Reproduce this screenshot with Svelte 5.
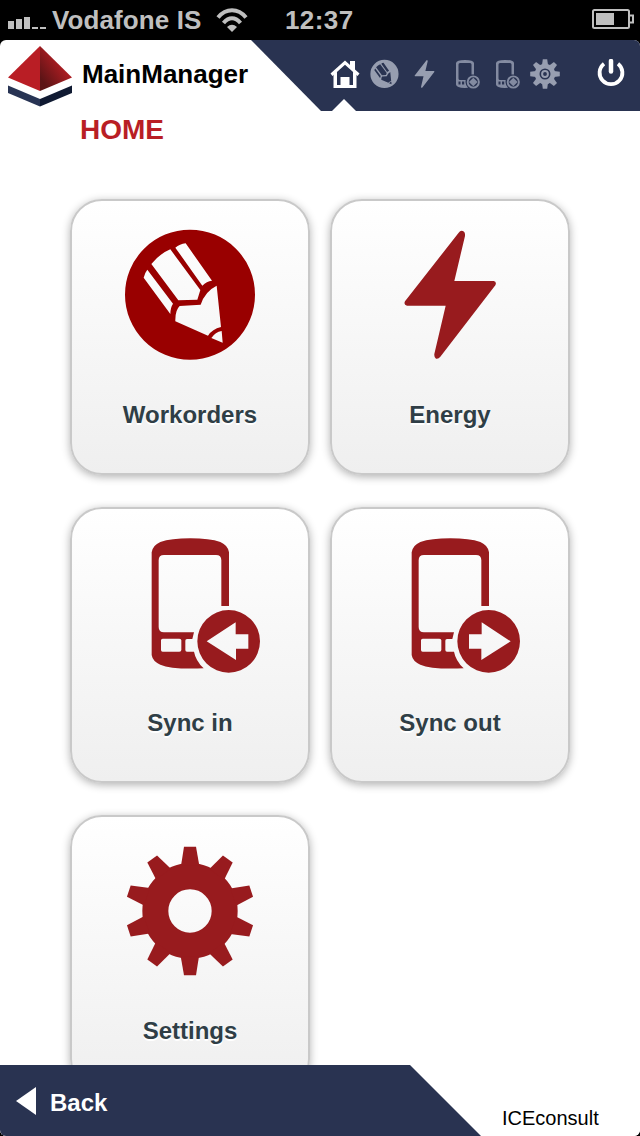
<script lang="ts">
	type Tile = { id: string; label: string }

	const tiles: Tile[] = [
		{ id: 'workorders', label: 'Workorders' },
		{ id: 'energy', label: 'Energy' },
		{ id: 'in', label: 'Sync in' },
		{ id: 'out', label: 'Sync out' },
		{ id: 'settings', label: 'Settings' },
	]

	let current = $state('home')

	// ten teeth for the large gear, eight for the small one
	const bigTeeth = Array.from({ length: 10 }, (_, i) => i * 36)
	const smallTeeth = Array.from({ length: 8 }, (_, i) => i * 45)
</script>

{#snippet shape(id: string)}
	{#if id === 'workorders'}
		<path
			fill-rule="evenodd"
			d="M240 44a195 195 0 1 0 0 390a195 195 0 1 0 0-390ZM196 98Q209 87 227 85L306 197Q290 199 277 212ZM124 147Q149 116 181 103L271 225L262 254L205 256ZM112 164L189 266Q181 278 181 297L101 188Q104 174 112 164ZM196 319Q195 286 209 273L272 269Q285 229 320 212L333 336Q307 342 294 362ZM304 369Q316 351 335 348L338 383Z"
		/>
	{:else if id === 'energy'}
		<path
			d="M266 53Q271 46 278 48Q286 50 285 63L253 198H371Q381 200 376 211L211 425Q205 433 198 431Q192 428 193 417L227 272H111Q100 269 105 259Z"
		/>
	{:else if id === 'in' || id === 'out'}
		<path
			fill-rule="evenodd"
			d="M125 88Q128 67 151 57Q183 46 241 46Q299 46 331 57Q354 67 357 88V249H334V112Q334 96 318 96H162Q146 96 146 112V312Q146 328 162 328H252L247 348H231Q226 348 226 353V381Q226 386 231 386H252Q257 413 281 436Q185 440 151 425Q128 415 125 396ZM158 347Q153 347 153 352V381Q153 386 158 386H208Q214 386 214 381V352Q214 347 208 347Z"
		/>
		<path
			fill-rule="evenodd"
			d={id === 'in'
				? 'M356 261a94 94 0 1 0 0 188a94 94 0 1 0 0-188ZM290 355L377 298V334H415V377H378V411Z'
				: 'M356 261a94 94 0 1 0 0 188a94 94 0 1 0 0-188ZM422 355L335 298V334H297V377H334V411Z'}
		/>
	{:else if id === 'settings'}
		<circle cx="240" cy="240" r="104" fill="none" stroke="currentColor" stroke-width="78" />
		{#each bigTeeth as angle}
			<path d="M213 104L222 47H258L268 104Z" transform="rotate({angle} 240 240)" />
		{/each}
	{/if}
{/snippet}

<div class="screen">
	<div class="status">
		<svg class="signal" viewBox="0 0 38 12" width="38" height="12">
			<path d="M0 4h6v8H0zM8 2h6v10H8zM16 0h6v12h-6zM24 10h6v2h-6zM32 10h6v2h-6z" />
		</svg>
		<span class="carrier">Vodafone IS</span>
		<svg class="wifi" viewBox="0 0 32 24" width="32" height="24">
			<g fill="none" stroke="currentColor" stroke-width="4">
				<path d="M2 9.500Q8 2.300 16 2.300T30 9.500" />
				<path d="M7.500 15Q11.500 10.300 16 10.300T24.500 15" />
			</g>
			<path d="M11 19Q16 14.500 21 19L16 24Z" />
		</svg>
		<span class="clock">12:37</span>
		<svg class="battery" viewBox="0 0 42 20" width="42" height="20">
			<rect x="1" y="1" width="36" height="18" rx="1.500" fill="none" stroke="currentColor" stroke-width="2" />
			<path d="M4 4h18v12H4z" />
			<path d="M37 6.500h4v7h-4" fill="none" stroke="currentColor" stroke-width="2" />
		</svg>
	</div>

	<div class="page">
		<header>
			<div class="brand">
				<svg viewBox="0 0 64 61" width="64" height="61">
					<defs>
						<linearGradient id="side" x1="0.8" y1="0.1" x2="0.1" y2="0.8">
							<stop offset="0.3" stop-color="#ad1d22" />
							<stop offset="1" stop-color="#5c1416" />
						</linearGradient>
					</defs>
					<path fill="#b91e25" d="M32 0V45L0 31.500Z" />
					<path fill="url(#side)" d="M32 0L64 31.500L32 45Z" />
					<path fill="#283454" d="M0 39.500L32 53V60.500L0 47Z" />
					<path fill="#101a32" d="M64 39.500L32 53V60.500L64 47Z" />
				</svg>
				<span>MainManager</span>
			</div>
			<nav>
				<button class:active={current === 'home'} aria-label="Home" onclick={() => (current = 'home')}>
					<svg viewBox="0 0 30 30" width="30" height="30">
						<path d="M0.500 14.500L15 1.500L20 6V2H25V10.500L29.500 14.500L27.500 17L15 5.700L2.500 17Z" />
						<path
							fill-rule="evenodd"
							d="M3.500 15.500L7 12.500V26H10.500V18H19.500V26H23V12.500L26.500 15.500V29H3.500Z"
						/>
						<path d="M11.700 19h6.600v8h-6.600z" />
					</svg>
				</button>
				{#each tiles as tile (tile.id)}
					<button
						class:active={current === tile.id}
						class:dim={tile.id === 'in' || tile.id === 'out'}
						aria-label={tile.label}
						onclick={() => (current = tile.id)}
					>
						{#if tile.id === 'settings'}
							<svg viewBox="0 0 30 30" width="30" height="30">
								<circle cx="15" cy="15" r="7.900" fill="none" stroke="currentColor" stroke-width="4.800" />
								<circle cx="15" cy="15" r="2.900" fill="none" stroke="currentColor" stroke-width="2" />
								{#each smallTeeth as angle}
									<path d="M12 6L12.800 0.200H17.200L18 6Z" transform="rotate({angle} 15 15)" />
								{/each}
							</svg>
						{:else if tile.id === 'in' || tile.id === 'out'}
							<svg viewBox="0 0 30 30" width="30" height="30">
								<path
									fill-rule="evenodd"
									d="M6 4Q6.500 1 15 1T24 4V15.500H21.500V5.500Q21.500 4 20 4H10Q8.500 4 8.500 5.500V19.500Q8.500 21 10 21H15.700L15.500 23Q15.600 26.500 18 28.800Q6.500 29.500 6 25.500ZM8.500 22.500V25.500H10.500V22.500ZM12 22.500V25.500H14.200V22.500Z"
								/>
								<circle cx="23.300" cy="23" r="5.600" fill="none" stroke="currentColor" stroke-width="1.900" />
								<path d="M23.300 18.700L27.600 23L23.300 27.300L19 23Z" />
							</svg>
						{:else}
							<svg viewBox="40 32 415 415" width="30" height="30">
								{@render shape(tile.id)}
							</svg>
						{/if}
					</button>
				{/each}
				<button class="power" aria-label="Log out">
					<svg viewBox="0 0 28 28" width="28" height="28" fill="none" stroke="currentColor">
						<path stroke-width="3.800" d="M7 4.800A11.400 11.400 0 1 0 21 4.800" />
						<path stroke-width="4.500" stroke-linecap="round" d="M14 2V12.500" />
					</svg>
				</button>
			</nav>
		</header>

		<h1>HOME</h1>

		<main>
			{#each tiles as tile (tile.id)}
				<button class="tile" onclick={() => (current = tile.id)}>
					<svg
						viewBox="0 0 480 480"
						width="160"
						height="160"
						class:deep={tile.id === 'workorders'}
					>
						{@render shape(tile.id)}
					</svg>
					<span>{tile.label}</span>
				</button>
			{/each}
		</main>

		<footer>
			<button class="back">
				<svg viewBox="0 0 20 28" width="20" height="28"><path d="M0 14L20 0V28Z" /></svg>
				<span>Back</span>
			</button>
			<span class="company">ICEconsult</span>
		</footer>
	</div>
</div>

<style>
	:global(body) {
		background: #000;
	}
	.screen {
		display: flex;
		flex-direction: column;
		width: 640px;
		height: 1136px;
		overflow: hidden;
		font-family: 'Liberation Sans', Arial, Helvetica, sans-serif;
	}
	svg {
		display: block;
		flex: none;
		fill: currentColor;
	}
	.power svg {
		fill: none;
	}
	button {
		margin: 0;
		padding: 0;
		border: 0;
		background: none;
		color: inherit;
		font: inherit;
	}
	.status {
		display: flex;
		flex: none;
		align-items: center;
		box-sizing: border-box;
		height: 40px;
		padding: 0 6px 0 8px;
		color: #bfbfbf;
		font-size: 26px;
		font-weight: bold;
		line-height: 40px;
	}
	.signal {
		margin-top: 6px;
	}
	.carrier {
		width: 151px;
		margin-left: 6px;
		letter-spacing: 0.1px;
		white-space: nowrap;
	}
	.wifi {
		margin: -1px 0 0 13px;
	}
	.clock {
		margin-left: 37px;
		letter-spacing: 0.4px;
	}
	.battery {
		margin: -2px 0 0 auto;
	}
	.page {
		display: flex;
		flex: 1;
		flex-direction: column;
		min-height: 0;
		overflow: hidden;
		border-radius: 6px;
		background: #fff;
	}
	header {
		display: flex;
		flex: none;
		height: 71px;
	}
	.brand {
		display: flex;
		box-sizing: border-box;
		width: 251px;
		padding: 6px 0 0 8px;
		gap: 10px;
		font-size: 26px;
		font-weight: bold;
		line-height: 56px;
	}
	nav {
		display: flex;
		flex: 1;
		padding-left: 74px;
		background: #293351;
		color: #979eb0;
		clip-path: polygon(0 0, 100% 0, 100% 100%, 70px 100%);
	}
	nav button {
		display: flex;
		flex-direction: column;
		align-items: center;
		justify-content: space-between;
		width: 40px;
		padding-top: 19px;
	}
	nav .dim {
		color: #838ba1;
	}
	nav .active,
	nav .power {
		color: #fff;
	}
	nav .active::after {
		content: '';
		width: 24px;
		height: 12px;
		margin-right: 2px;
		background: #fff;
		clip-path: polygon(50% 0, 100% 100%, 0 100%);
	}
	nav .power {
		margin: 0 9px 0 auto;
	}
	h1 {
		flex: none;
		margin: 0 0 0 80px;
		color: #b91e25;
		font-size: 28px;
		line-height: 37px;
	}
	main {
		display: grid;
		flex: 1;
		grid-template-columns: 240px 240px;
		grid-auto-rows: 276px;
		gap: 32px 20px;
		min-height: 0;
		padding: 51px 0 0 70px;
	}
	.tile {
		display: flex;
		flex-direction: column;
		align-items: center;
		box-sizing: border-box;
		padding-top: 14px;
		border: 2px solid #c9c9c9;
		border-radius: 32px;
		background: linear-gradient(#fff, #efefef);
		box-shadow: 0 2px 8px rgba(0, 0, 0, 0.3);
		color: #2f3e46;
		font-size: 24px;
		font-weight: bold;
		text-shadow: 0 2px 0 #fff;
	}
	.tile svg {
		color: #981b1e;
	}
	.tile svg.deep {
		color: #990000;
	}
	.tile span {
		margin-top: 26px;
		line-height: 28px;
	}
	footer {
		z-index: 1;
		display: flex;
		flex: none;
		height: 71px;
		background: #fff;
	}
	.back {
		display: flex;
		align-items: center;
		box-sizing: border-box;
		width: 481px;
		padding: 0 0 0 16px;
		gap: 14px;
		background: #293351;
		clip-path: polygon(0 0, 410px 0, 100% 100%, 0 100%);
		color: #fff;
		font-size: 24px;
		font-weight: bold;
	}
	.back span {
		margin-top: 5px;
	}
	.company {
		margin-left: 21px;
		font-size: 20px;
		line-height: 106px;
	}
</style>
